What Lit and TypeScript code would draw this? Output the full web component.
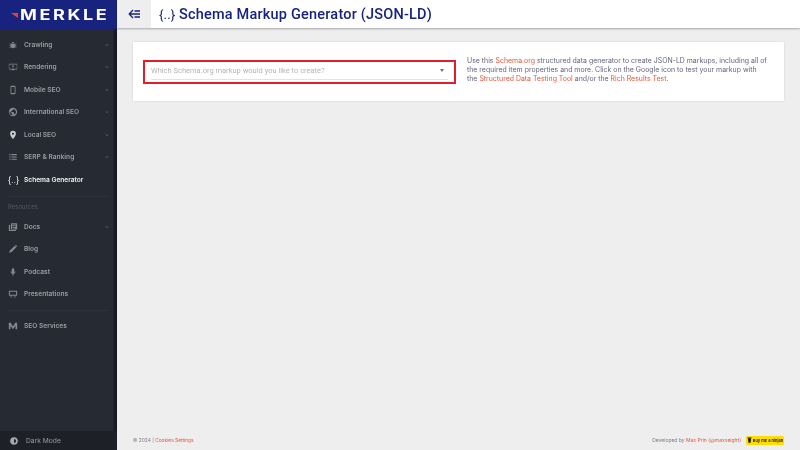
import { LitElement, html, css, svg } from "lit";
import { customElement } from "lit/decorators.js";

const ICONS: Record<string, unknown> = {
  bug: svg`<path fill="currentColor" d="M12 5a3 3 0 0 1 3 3H9a3 3 0 0 1 3-3zM8 9h8l1 1 2.500-2 1 1-3 2.500V13h3v1.500h-3v1l3 2.500-1 1-2.800-2.200A5 5 0 0 1 12 20a5 5 0 0 1-4.700-3.200L4.500 19l-1-1 3-2.500v-1h-3V13h3v-1.500l-3-2.500 1-1L7 10z"/>`,
  monitor: svg`<path fill="currentColor" d="M3 4h18a1 1 0 0 1 1 1v12a1 1 0 0 1-1 1h-6v2H9v-2H3a1 1 0 0 1-1-1V5a1 1 0 0 1 1-1zm0 2v10h18V6zm9 1 3 3h-2v4h-2v-4H9z"/>`,
  phone: svg`<path fill="currentColor" d="M8 2h8a2 2 0 0 1 2 2v16a2 2 0 0 1-2 2H8a2 2 0 0 1-2-2V4a2 2 0 0 1 2-2zm0 3v14h8V5z"/>`,
  globe: svg`<path fill="currentColor" d="M12 2a10 10 0 1 1 0 20 10 10 0 0 1 0-20zM4.200 10.500A8 8 0 0 0 11 19.900V18a2 2 0 0 1-2-2v-1zM14 4.600V5a2 2 0 0 1-2 2h-2v2a1 1 0 0 1-1 1H7v2h6a1 1 0 0 1 1 1v3h1a2 2 0 0 1 2 1.400A8 8 0 0 0 14 4.600z"/>`,
  pin: svg`<path fill="currentColor" fill-rule="evenodd" d="M12 2a7 7 0 0 1 7 7c0 5-7 13-7 13S5 14 5 9a7 7 0 0 1 7-7zm0 4.500a2.500 2.500 0 1 0 0 5 2.500 2.500 0 0 0 0-5z"/>`,
  list: svg`<path fill="currentColor" d="M3 5h3v2.500H3zm5 0h13v2.500H8zM3 10.500h3V13H3zm5 0h13V13H8zM3 16h3v2.500H3zm5 0h13v2.500H8z"/>`,
  docs: svg`<path fill="currentColor" fill-rule="evenodd" d="M8 3h13a1 1 0 0 1 1 1v13a1 1 0 0 1-1 1H8a1 1 0 0 1-1-1V4a1 1 0 0 1 1-1zm1.500 3v2H19V6zm0 4v2H19v-2zm0 4v2H16v-2zM2 7h3v12h14v2.500H3a1 1 0 0 1-1-1z"/>`,
  pencil: svg`<path fill="currentColor" d="M3 21l1-5L16 4l4 4L8 20zM17.500 2.500a1.500 1.500 0 0 1 2 0l2 2a1.500 1.500 0 0 1 0 2L21 7l-4-4z"/>`,
  mic: svg`<path fill="currentColor" d="M12 3a3 3 0 0 1 3 3v6a3 3 0 0 1-6 0V6a3 3 0 0 1 3-3zM6 11h1.800a4.200 4.200 0 0 0 8.400 0H18a6 6 0 0 1-5 5.800V21h-2v-4.200A6 6 0 0 1 6 11z"/>`,
  screen: svg`<path fill="currentColor" fill-rule="evenodd" d="M3 4h18a1 1 0 0 1 1 1v10a1 1 0 0 1-1 1h-4l1 5h-2l-1-5H9l-1 5H6l1-5H3a1 1 0 0 1-1-1V5a1 1 0 0 1 1-1zm1.500 2.500v7h15v-7z"/>`,
  m: svg`<path fill="currentColor" d="M2 4h4.500L12 13l5.500-9H22v16h-4V11l-4.700 7.500h-2.600L6 11v9H2z"/>`,
  contrast: svg`<path fill="currentColor" fill-rule="evenodd" d="M12 3a9 9 0 1 1 0 18 9 9 0 0 1 0-18zm0 4v10a5 5 0 0 0 0-10zM1.500 11.200h2v1.600h-2zM20.500 11.200h2v1.600h-2z"/>`,
};

const ic = (name: string) =>
  html`<svg class="ic ${name}" viewBox="0 0 24 24" aria-hidden="true">${ICONS[name]}</svg>`;

const chev = html`<svg class="chev" viewBox="0 0 8 8" aria-hidden="true"><path d="M1.500 2.800 4 5.200l2.500-2.400" fill="none" stroke="currentColor" stroke-width="1.200"/></svg>`;

const MAIN = [
  { i: "bug", t: "Crawling", c: true },
  { i: "monitor", t: "Rendering", c: true },
  { i: "phone", t: "Mobile SEO", c: true },
  { i: "globe", t: "International SEO", c: true },
  { i: "pin", t: "Local SEO", c: true },
  { i: "list", t: "SERP & Ranking", c: true },
];
const RES = [
  { i: "docs", t: "Docs", c: true },
  { i: "pencil", t: "Blog", c: false },
  { i: "mic", t: "Podcast", c: false },
  { i: "screen", t: "Presentations", c: false },
];

@customElement("app-root")
export class AppRoot extends LitElement {
  static styles = css`
    :host {
      display: block;
      width: 800px;
      height: 450px;
      overflow: hidden;
      font-family: Roboto, "Liberation Sans", sans-serif;
    }
    .shell { display: flex; height: 450px; background: #eeeeee; filter: blur(0.3px); }
    .side {
      width: 117px;
      flex: none;
      display: flex;
      flex-direction: column;
      background: #262b33;
      box-shadow: inset -4px 0 2px -1px rgba(0, 0, 0, 0.400);
      box-sizing: border-box;
    }
    .logo {
      height: 29px;
      flex: none;
      background: #18237f;
      display: flex;
      align-items: center;
      padding-left: 11px;
      gap: 1.500px;
    }
    .tri { width: 7px; height: 5px; flex: none; margin-top: 2px; }
    .logotext {
      font-family: Inter, "Liberation Sans", sans-serif;
      font-size: 14px;
      font-weight: 700;
      line-height: 1;
      color: #fff;
      letter-spacing: 2px;
      transform: scaleX(1.290);
      transform-origin: left center;
    }
    nav { flex: 1; padding-top: 4.500px; display: flex; flex-direction: column; }
    .item {
      height: 22.500px;
      flex: none;
      display: flex;
      align-items: center;
      color: #9a9da2;
      font-family: Inter, Roboto, sans-serif;
      font-size: 6.600px;
      font-weight: 600;
      padding-left: 8px;
      padding-right: 8px;
    }
    .item.active { color: #eef0f2; }
    .ic { width: 10px; height: 10px; flex: none; margin-right: 6px; display: block; color: #85888d; }
    .ic.pin { color: #c8cacd; }
    .item .lbl { flex: 1; white-space: nowrap; }
    .chev { width: 4px; height: 4px; color: #7d8086; flex: none; }
    .braces {
      width: 10px;
      margin-right: 6px;
      font-family: Roboto, sans-serif;
      font-size: 8.500px;
      font-weight: 400;
      text-align: center;
      letter-spacing: 0.300px;
      white-space: nowrap;
    }
    .rule { height: 1px; background: #2d3239; margin: 4.500px 8px 0; flex: none; }
    .caption {
      color: #565a61;
      font-size: 6px;
      font-family: Inter, Roboto, sans-serif;
      padding: 6px 8px 5px;
      height: 8px;
      line-height: 8px;
      flex: none;
    }
    .gap { height: 4px; flex: none; }
    .dark {
      height: 19px;
      flex: none;
      background: #1d2127;
      display: flex;
      align-items: center;
      color: #9a9da2;
      font-family: Inter, Roboto, sans-serif;
      font-size: 6.700px;
      font-weight: 400;
      padding-left: 9px;
    }
    .dark .ic { margin-right: 7px; color: #a6a8ac; }
    .main { flex: 1; min-width: 0; display: flex; flex-direction: column; }
    .top {
      height: 28px;
      flex: none;
      background: #fff;
      display: flex;
      align-items: center;
      box-shadow: 0 1px 2px rgba(0, 0, 0, 0.300);
      position: relative;
    }
    .menu {
      width: 34px;
      height: 28px;
      flex: none;
      background: #eeeeee;
      display: flex;
      align-items: center;
      justify-content: center;
      color: #18237f;
    }
    .menu svg { width: 13px; height: 10px; }
    .title {
      color: #18237f;
      font-size: 14.500px;
      font-weight: 500;
      padding-left: 8px;
      white-space: nowrap;
      letter-spacing: 0.200px;
      display: flex;
      align-items: center;
    }
    .title .br {
      font-size: 13px;
      font-weight: 400;
      width: 20px;
      letter-spacing: 0.200px;
    }
    .body { flex: 1; padding: 14px 16px 0 16px; display: flex; flex-direction: column; }
    .card {
      height: 59px;
      background: #fff;
      box-shadow: 0 0 2px rgba(0, 0, 0, 0.120);
      display: flex;
      align-items: center;
      box-sizing: border-box;
      padding-left: 10px;
    }
    .select {
      width: 313px;
      height: 24px;
      flex: none;
      box-sizing: border-box;
      border: 2px solid #e31e2c;
      padding: 0 6px;
      display: flex;
      flex-direction: column;
    }
    .select .row {
      flex: 1;
      display: flex;
      align-items: center;
      justify-content: space-between;
      border-bottom: 1px solid #e3e3e3;
      margin-bottom: 2px;
      color: #b4b4b4;
      font-size: 7.500px;
      padding-right: 4px;
    }
    .caret { width: 0; height: 0; border: 2.500px solid transparent; border-top: 3px solid #6f6f6f; border-bottom: 0; }
    .desc {
      margin: 0 0 4px 11px;
      width: 300px;
      color: #63657f;
      font-family: Inter, Roboto, sans-serif;
      font-size: 6.950px;
      line-height: 9.200px;
      font-weight: 400;
    }
    a { color: #e0593c; text-decoration: none; }
    .foot {
      margin-top: auto;
      height: 20px;
      display: flex;
      align-items: center;
      justify-content: space-between;
      font-size: 5px;
      color: #7a7c85;
      font-family: Inter, Roboto, sans-serif;
    }
    .copy { font-size: 4.850px; }
    .right { display: flex; align-items: center; gap: 5px; }
    .coffee {
      background: #ffdd00;
      border-radius: 1.500px;
      height: 9px;
      width: 38px;
      display: flex;
      align-items: center;
      justify-content: center;
      gap: 1px;
      color: #111;
      font-size: 4px;
      font-weight: 600;
      white-space: nowrap;
    }
    .coffee svg { width: 5px; height: 6px; }
  `;

  private row(r: { i: string; t: string; c: boolean }) {
    return html`<div class="item">${ic(r.i)}<span class="lbl">${r.t}</span>${r.c ? chev : ""}</div>`;
  }

  render() {
    return html`
      <div class="shell">
        <aside class="side">
          <div class="logo">
            <svg class="tri" viewBox="0 0 7 5" aria-hidden="true"><path d="M0 0h7v5z" fill="#e8402f"/></svg>
            <span class="logotext">MERKLE</span>
          </div>
          <nav>
            ${MAIN.map((r) => this.row(r))}
            <div class="item active"><span class="braces">{..}</span><span class="lbl">Schema Generator</span></div>
            <div class="rule"></div>
            <div class="caption">Resources</div>
            ${RES.map((r) => this.row(r))}
            <div class="rule"></div>
            <div class="gap"></div>
            <div class="item">${ic("m")}<span class="lbl">SEO Services</span></div>
          </nav>
          <div class="dark">${ic("contrast")}<span>Dark Mode</span></div>
        </aside>
        <div class="main">
          <header class="top">
            <div class="menu">
              <svg viewBox="0 0 13 10" aria-hidden="true"><path d="M5 1 1.200 5 5 9M1.500 5H12M6.500 2H12M6.500 8H12" fill="none" stroke="currentColor" stroke-width="1.300"/></svg>
            </div>
            <div class="title"><span class="br">{..}</span>Schema Markup Generator (JSON-LD)</div>
          </header>
          <div class="body">
            <section class="card">
              <div class="select">
                <div class="row"><span>Which Schema.org markup would you like to create?</span><span class="caret"></span></div>
              </div>
              <p class="desc">Use this <a>Schema.org</a> structured data generator to create JSON-LD markups, including all of the required item properties and more. Click on the Google icon to test your markup with the <a>Structured Data Testing Tool</a> and/or the <a>Rich Results Test</a>.</p>
            </section>
            <footer class="foot">
              <span class="copy">© 2024 | <a>Cookies Settings</a></span>
              <span class="right">
                <span>Developed by <a>Max Prin</a> <a>(@maxxeight)</a></span>
                <span class="coffee"><svg viewBox="0 0 10 12" aria-hidden="true"><path d="M1 1h8v2H1zM2 3.500h6L7 11.500H3z" fill="#111"/></svg>Buy me a ninjan</span>
              </span>
            </footer>
          </div>
        </div>
      </div>
    `;
  }
}
